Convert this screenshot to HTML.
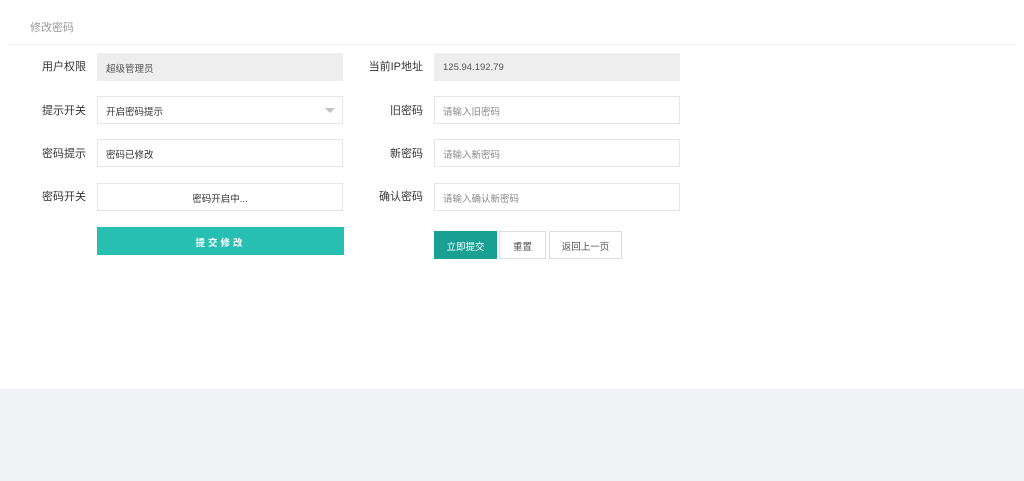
<!DOCTYPE html>
<html><head><meta charset="utf-8"><style>
*{margin:0;padding:0;box-sizing:border-box}
body{width:1024px;height:481px;background:#f0f1f5;font-family:"Liberation Sans","Noto Sans CJK SC",sans-serif;position:relative;overflow:hidden}
.panel{position:absolute;left:0;top:0;width:1024px;height:389px;background:#fff}
.title{position:absolute;left:30px;top:19px;font-size:11px;color:#999}
.line{position:absolute;left:8px;top:44px;width:1008px;height:1px;background:#eee}
.lb{position:absolute;font-size:11px;color:#333;text-align:right;width:80px;line-height:27px;margin-top:1px}
.in{position:absolute;width:246px;height:28px;border:1px solid #e6e6e6;background:#fff;font-size:9.5px;color:#333;display:flex;align-items:center;padding-left:8px;padding-top:1px}
.ro{background:#eee;border-color:#eee;color:#555}
.ph{color:#888}
.btn{position:absolute;height:28px;font-size:9.5px;display:flex;align-items:center;justify-content:center;padding-top:1px;border:1px solid #ddd;background:#fff;color:#555}
</style></head><body>
<div class="panel">
<div class="title">修改密码</div>
<div class="line"></div>

<div class="lb" style="left:6px;top:53px">用户权限</div>
<div class="in ro" style="left:97px;top:53px">超级管理员</div>
<div class="lb" style="left:6px;top:97px">提示开关</div>
<div class="in" style="left:97px;top:96px">开启密码提示<span style="position:absolute;right:7px;top:11px;width:0;height:0;border-left:5px solid transparent;border-right:5px solid transparent;border-top:5px solid #c2c2c2"></span></div>
<div class="lb" style="left:6px;top:140px">密码提示</div>
<div class="in" style="left:97px;top:139px">密码已修改</div>
<div class="lb" style="left:6px;top:183px">密码开关</div>
<div class="in" style="left:97px;top:183px;justify-content:center;padding-left:0">密码开启中...</div>
<div class="btn" style="left:97px;top:227px;width:247px;background:#26bfb1;border-color:#26bfb1;color:#fff;font-weight:bold;letter-spacing:3px">提交修改</div>

<div class="lb" style="left:343px;top:53px">当前IP地址</div>
<div class="in ro" style="left:434px;top:53px">125.94.192.79</div>
<div class="lb" style="left:343px;top:97px">旧密码</div>
<div class="in ph" style="left:434px;top:96px">请输入旧密码</div>
<div class="lb" style="left:343px;top:140px">新密码</div>
<div class="in ph" style="left:434px;top:139px">请输入新密码</div>
<div class="lb" style="left:343px;top:183px">确认密码</div>
<div class="in ph" style="left:434px;top:183px">请输入确认新密码</div>
<div class="btn" style="left:434px;top:231px;width:63px;background:#1aa093;border-color:#1aa093;color:#fff">立即提交</div>
<div class="btn" style="left:499px;top:231px;width:47px">重置</div>
<div class="btn" style="left:549px;top:231px;width:73px">返回上一页</div>
</div>
</body></html>
